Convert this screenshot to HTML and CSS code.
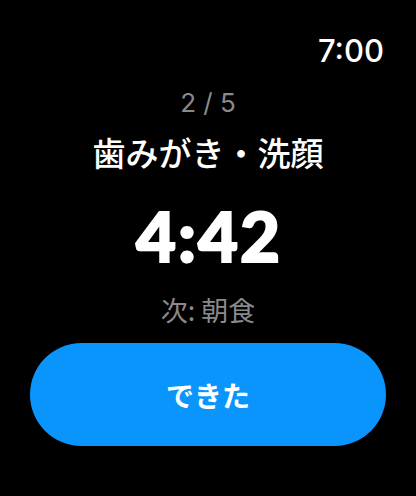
FILE: index.html
```html
<!DOCTYPE html>
<html lang="ja">
<head>
<meta charset="utf-8">
<link rel="stylesheet" href="styles.css">
</head>
<body>
<div class="screen">
  <div class="status"><span class="clock">7:00</span></div>
  <div class="step">2 / 5</div>
  <div class="title">歯みがき・洗顔</div>
  <div class="timer">4:42</div>
  <div class="next">次: 朝食</div>
  <button class="done">できた</button>
</div>
</body>
</html>
```
FILE: styles.css
```css
html, body {
  margin: 0;
  padding: 0;
  background: #000;
}
.screen {
  width: 416px;
  height: 496px;
  display: flex;
  flex-direction: column;
  align-items: center;
  font-family: Inter, "Noto Sans CJK JP", sans-serif;
  color: #fff;
  box-sizing: border-box;
  overflow: hidden;
}
.status {
  align-self: stretch;
  display: flex;
  justify-content: flex-end;
  padding: 33px 32px 0 0;
}
.clock {
  font-size: 31px;
  line-height: 36px;
  font-weight: 500;
}
.step {
  margin-top: 19px;
  font-size: 26px;
  line-height: 30px;
  color: #8a8a8e;
}
.title {
  margin-top: 14px;
  font-family: "Noto Sans CJK JP", sans-serif;
  font-size: 33px;
  line-height: 40px;
  font-weight: 500;
}
.timer {
  margin-top: 29px;
  padding-left: 2px;
  font-family: Lato, sans-serif;
  font-size: 69px;
  line-height: 70px;
  font-weight: 900;
  letter-spacing: 2px;
  -webkit-text-stroke: 2px #fff;
}
.next {
  margin-top: 22px;
  font-family: "Noto Sans CJK JP", sans-serif;
  font-size: 27px;
  line-height: 34px;
  color: #8a8a8e;
}
.done {
  margin-top: 16px;
  align-self: stretch;
  margin-left: 30px;
  margin-right: 30px;
  height: 103px;
  border: none;
  border-radius: 52px;
  background: #0a95fd;
  color: #fff;
  font-family: "Noto Sans CJK JP", sans-serif;
  font-size: 28px;
  font-weight: 700;
  padding: 0;
}
```
